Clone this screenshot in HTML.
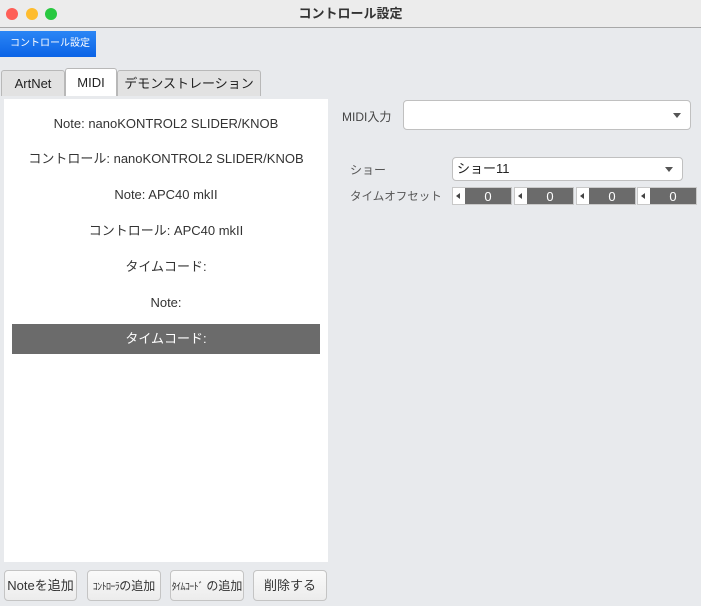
<!DOCTYPE html>
<html><head><meta charset="utf-8"><style>
*{box-sizing:border-box;margin:0;padding:0}
html,body{width:701px;height:606px;overflow:hidden}
body{background:#e8eaed;font-family:"Liberation Sans","Noto Sans CJK JP",sans-serif;position:relative;color:#222}
.abs{position:absolute;white-space:nowrap}
.title{left:0;top:0;width:701px;height:28px;background:#ececec;border-bottom:1px solid #a8a8a8;text-align:center;font-size:13px;font-weight:bold;line-height:27px;color:#333}
.dot{width:12px;height:12px;border-radius:50%;top:8px}
.blue{left:0;top:31px;width:96px;height:26px;background:linear-gradient(#2b86f5,#0b63e6);color:#fff;font-size:10px;line-height:26px;padding-left:10px}
.tab{top:70px;height:26px;border:1px solid #b8b8b8;border-bottom:none;border-radius:3px 3px 0 0;background:#e2e2e2;font-size:13px;line-height:25px;text-align:center}
.list{left:4px;top:99px;width:324px;height:463px;background:#fff}
.row{position:absolute;left:8px;width:308px;height:30px;line-height:30px;text-align:center;font-size:13px;color:#333;white-space:nowrap}
.btn{top:570px;height:31px;border:1px solid #c4c4c4;border-radius:4px;background:linear-gradient(#fafafa,#ececec);font-size:13px;line-height:29px;text-align:center;color:#333;overflow:visible}
.sm{font-size:10px;letter-spacing:-0.6px}
.combo{background:#fff;border:1px solid #c0c0c0;border-radius:4px}
.tri{position:absolute;right:9px;width:0;height:0;border-left:4px solid transparent;border-right:4px solid transparent;border-top:5px solid #555}
.spin{top:187px;height:18px;width:60px;border:1px solid #c8c8c8;background:#fff}
.spin i{position:absolute;left:3px;top:5px;width:0;height:0;border-top:3.5px solid transparent;border-bottom:3.5px solid transparent;border-right:4px solid #444}
.spin b{position:absolute;left:12px;top:0;right:0;bottom:0;background:#6b6b6b;color:#fff;font-weight:normal;font-size:13px;text-align:center;line-height:17px}
</style></head><body>
<div class="abs title">コントロール設定</div>
<div class="abs dot" style="left:6px;background:#fe5f57"></div>
<div class="abs dot" style="left:26px;background:#febc2e"></div>
<div class="abs dot" style="left:45px;background:#28c840"></div>
<div class="abs blue">コントロール設定</div>
<div class="abs tab" style="left:1px;width:64px">ArtNet</div>
<div class="abs tab" style="left:65px;width:52px;background:#fff;top:68px;height:28px;line-height:27px">MIDI</div>
<div class="abs tab" style="left:117px;width:144px">デモンストレーション</div>
<div class="abs list">
<div class="row" style="top:10px">Note: nanoKONTROL2 SLIDER/KNOB</div>
<div class="row" style="top:45px">コントロール: nanoKONTROL2 SLIDER/KNOB</div>
<div class="row" style="top:81px">Note: APC40 mkII</div>
<div class="row" style="top:117px">コントロール: APC40 mkII</div>
<div class="row" style="top:153px">タイムコード:</div>
<div class="row" style="top:189px">Note:</div>
<div class="row" style="top:225px;background:#6b6b6b;color:#fff">タイムコード:</div>
</div>
<div class="abs btn" style="left:4px;width:73px">Noteを追加</div>
<div class="abs btn" style="left:87px;width:74px"><span class="sm">ｺﾝﾄﾛｰﾗ</span><span style="font-size:12px">の追加</span></div>
<div class="abs btn" style="left:170px;width:74px"><span class="sm">ﾀｲﾑｺｰﾄﾞ</span><span style="font-size:12px"> の追加</span></div>
<div class="abs btn" style="left:253px;width:74px">削除する</div>
<div class="abs" style="left:342px;top:108px;font-size:12px;color:#444">MIDI入力</div>
<div class="abs combo" style="left:403px;top:100px;width:288px;height:30px"><div class="tri" style="top:12px"></div></div>
<div class="abs" style="left:350px;top:161px;font-size:12px;color:#555">ショー</div>
<div class="abs combo" style="left:452px;top:157px;width:231px;height:24px;font-size:13px;line-height:22px;padding-left:4px">ショー11<div class="tri" style="top:9px"></div></div>
<div class="abs" style="left:350px;top:188px;font-size:11.5px;color:#555">タイムオフセット</div>
<div class="abs spin" style="left:452px"><i></i><b>0</b></div>
<div class="abs spin" style="left:514px"><i></i><b>0</b></div>
<div class="abs spin" style="left:576px"><i></i><b>0</b></div>
<div class="abs spin" style="left:637px"><i></i><b>0</b></div>
</body></html>
